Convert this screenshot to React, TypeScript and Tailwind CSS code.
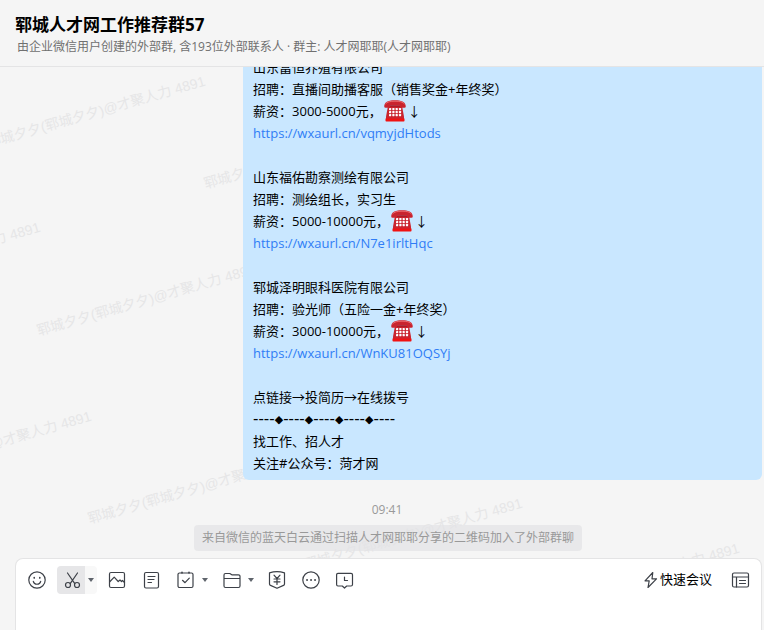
import React from 'react';

const JOBS = [
  {
    company: '山东富恒养殖有限公司',
    role: '直播间助播客服（销售奖金+年终奖）',
    salary: '3000-5000元，',
    url: 'https://wxaurl.cn/vqmyjdHtods',
  },
  {
    company: '山东福佑勘察测绘有限公司',
    role: '测绘组长，实习生',
    salary: '5000-10000元，',
    url: 'https://wxaurl.cn/N7e1irltHqc',
  },
  {
    company: '郓城泽明眼科医院有限公司',
    role: '验光师（五险一金+年终奖）',
    salary: '3000-10000元，',
    url: 'https://wxaurl.cn/WnKU81OQSYj',
  },
];

// Start points of the repeated watermark, relative to the chat area
const WATERMARKS = [
  { x: -13, y: 83 },
  { x: 204, y: 124 },
  { x: -178, y: 229 },
  { x: 37, y: 271 },
  { x: -127, y: 418 },
  { x: 88, y: 459 },
  { x: 304, y: 505 },
  { x: 521, y: 550 },
];

function Phone() {
  return (
    <svg viewBox="0 0 24 24" className="mx-px -mt-1.5 -mb-0.5 inline-block size-6 align-middle" role="img" aria-label="电话">
      <path d="M5 7h14l2 10.500v4H3v-4z" fill="#c9242e" />
      <path d="M2.500 19.500h19v2.200q0 .8-.8.800H3.300q-.8 0-.8-.8z" fill="#f01212" />
      <path d="M1.200 7.200C1.500 2.800 6 1.300 12 1.300s10.500 1.500 10.800 5.900q0 1.600-1.400 1.600h-3.200q-1.200 0-1.200-1.300V6.200H7v1.300q0 1.300-1.200 1.300H2.600Q1.200 8.800 1.200 7.200z" fill="#c9242e" />
      <path d="M2.500 5C4 2.800 7.500 2.200 12 2.200s8 .6 9.500 2.800" fill="none" stroke="#ec6a6e" strokeWidth="1" />
      <path d="M7 6.200h10v1.500H7z" fill="#a81620" />
      <g fill="#fff">
        {[9, 12, 15].map((y) =>
          [6, 9.3, 12.6, 15.900].map((x) => <rect key={`${x}-${y}`} x={x} y={y} width="2.200" height="2.200" rx=".4" />)
        )}
      </g>
    </svg>
  );
}

function Icon({ children }: { children: React.ReactNode }) {
  return (
    <svg viewBox="0 0 18 18" className="size-[18px] overflow-visible" fill="none" stroke="#3d4148" strokeWidth="1.2" strokeLinecap="round" strokeLinejoin="round">
      {children}
    </svg>
  );
}

function ToolButton({ label, active, children }: { label: string; active?: boolean; children: React.ReactNode }) {
  return (
    <button
      aria-label={label}
      className={`flex size-7 items-center justify-center ${active ? 'rounded-l bg-[#e6e6e8]' : 'rounded hover:bg-gray-100'}`}
    >
      <Icon>{children}</Icon>
    </button>
  );
}

function Caret({ label, active }: { label: string; active?: boolean }) {
  return (
    <button aria-label={label} className={`flex h-7 w-3 items-center justify-center rounded-r ${active ? 'bg-[#f8f8f8]' : ''}`}>
      <svg viewBox="0 0 6 4" className="h-1 w-1.5">
        <path d="M0 0h6L3 4z" fill="#5f646c" />
      </svg>
    </button>
  );
}

function Header() {
  return (
    <header className="shrink-0 border-b border-[#e4e4e5] px-[15px] pt-3 pb-2.5">
      <h1 className="text-[17px] leading-[26px] font-bold text-black">郓城人才网工作推荐群57</h1>
      <p className="pl-0.5 text-xs leading-[18px] text-[#707070]">
        由企业微信用户创建的外部群, 含193位外部联系人 · 群主: 人才网耶耶(人才网耶耶)
      </p>
    </header>
  );
}

function Divider() {
  return (
    <p className="h-[22px] font-['DejaVu_Sans',sans-serif] text-[15px]">
      {[0, 1, 2, 3].map((i) => (
        <React.Fragment key={i}>
          ----<span className="align-middle text-[11px] leading-none">◆</span>
        </React.Fragment>
      ))}
      ----
    </p>
  );
}

function JobMessage() {
  return (
    <div className="relative mr-0.5 ml-[243px] shrink-0 rounded-md bg-[#c9e7ff] px-2.5 py-1.5 text-[13px] leading-[22px] text-black">
      {JOBS.map((job) => (
        <div key={job.url} className="mb-[22px]">
          <p className="h-[22px]">{job.company}</p>
          <p className="h-[22px]">招聘：{job.role}</p>
          <p className="h-[22px] whitespace-nowrap">
            薪资：{job.salary}
            <Phone />↓
          </p>
          <p className="h-[22px]">
            <a href={job.url} className="text-[#2f7df6]">{job.url}</a>
          </p>
        </div>
      ))}
      <p>点链接→投简历→在线拨号</p>
      <Divider />
      <p>找工作、招人才</p>
      <p>关注#公众号：菏才网</p>
    </div>
  );
}

function Toolbar() {
  return (
    <div className="flex items-center justify-between px-[7px] pt-[7px]">
      <div className="flex items-center gap-1.5">
        <ToolButton label="表情">
          <circle cx="9" cy="9" r="8.2" />
          <path d="M5.300 10.300a3.800 3.800 0 0 0 7.400 0" />
          <path d="M6.200 6.500v.6M11.800 6.500v.6" strokeWidth="1.6" />
        </ToolButton>
        <div className="flex">
          <ToolButton label="截图" active>
            <path d="M5.500 2l7.300 10.600M15.500 2L8.200 12.600" />
            <circle cx="6" cy="14" r="2.500" />
            <circle cx="15" cy="14" r="2.500" />
          </ToolButton>
          <Caret label="截图选项" active />
        </div>
        <ToolButton label="图片">
          <rect x="1.500" y="1.500" width="15" height="15" rx="1.500" />
          <path d="M2 10.500l4.200-4.300 4 4.300 1.800-1.500 1.500 1.500 1-1 2 2" />
        </ToolButton>
        <ToolButton label="文档">
          <rect x="2.500" y="1.500" width="14" height="15.500" rx="1.500" />
          <path d="M6 5.500h7M6 8.500h6M6 11.500h3.500" />
        </ToolButton>
        <div className="flex">
          <ToolButton label="日程">
            <rect x="2" y="2" width="15" height="14.500" rx="1.500" />
            <path d="M6 1.200v.8M13 1.200v.8" strokeWidth="1.6" />
            <path d="M6.500 9.300l2.500 2.400 4.300-4.500" />
          </ToolButton>
          <Caret label="日程选项" />
        </div>
        <div className="flex">
          <ToolButton label="文件">
            <path d="M2 4a1.500 1.500 0 0 1 1.500-1.500h4.300l2 1.300h6.700A1.500 1.500 0 0 1 18 5.300v9.700a1.500 1.500 0 0 1-1.500 1.500h-13A1.500 1.500 0 0 1 2 15zM2 7.500h16" />
          </ToolButton>
          <Caret label="文件选项" />
        </div>
        <ToolButton label="收款">
          <path d="M1.500 1.800Q9-.4 16.500 1.800V13Q16.500 14 15.500 14.400L9 17.300l-6.500-2.900Q1.500 14 1.500 13z" />
          <path d="M6 4.200l3 3.300 3-3.300M9 7.500v6M6 8h6M6 10.800h6" />
        </ToolButton>
        <ToolButton label="更多">
          <circle cx="9" cy="9" r="8.2" />
          <path d="M5 9h.1M9 9h.1M13 9h.1" strokeWidth="1.8" />
        </ToolButton>
        <ToolButton label="聊天记录">
          <path d="M2 2.300h13A1.500 1.500 0 0 1 16.500 3.800v9.700a1.500 1.500 0 0 1-1.500 1.500h-4.300L8.500 17l-2.200-2H2A1.500 1.500 0 0 1 .6 13.500V3.800a1.500 1.500 0 0 1 1.400-1.500z" />
          <path d="M8.500 6v3.500h3" />
        </ToolButton>
      </div>
      <div className="flex items-center gap-3.5">
        <button className="flex h-7 items-center gap-0.5 text-[13px] text-black">
          <svg viewBox="0 0 14 18" className="h-[18px] w-3.5" fill="none" stroke="#3d4148" strokeWidth="1.2" strokeLinejoin="round">
            <path d="M8.800 1.500L1 9.800h4.200L4 16.500l8.500-8.700H8z" />
          </svg>
          快速会议
        </button>
        <ToolButton label="侧边栏">
          <rect x="1.500" y="2" width="16" height="14" rx="1.500" />
          <path d="M1.500 6h16M5.500 6v10M8.500 9.500h6M8.500 12.500h6" />
        </ToolButton>
      </div>
    </div>
  );
}

export default function App() {
  return (
    <div className="flex h-screen flex-col overflow-hidden bg-[#f5f5f5] font-['Open_Sans','Noto_Sans_CJK_SC',sans-serif]">
      <Header />
      <main className="relative flex min-h-0 flex-1 flex-col justify-end overflow-hidden">
        <div aria-hidden="true" className="pointer-events-none absolute inset-0">
          {WATERMARKS.map((mark) => (
            <span
              key={`${mark.x},${mark.y}`}
              className="absolute origin-left -rotate-[16deg] font-['Liberation_Sans','Noto_Sans_CJK_SC',sans-serif] text-sm leading-none whitespace-nowrap text-[#e6e6e7]"
              style={{ left: mark.x, top: mark.y - 14 }}
            >
              郓城夕夕(郓城夕夕)@才聚人力 4891
            </span>
          ))}
        </div>
        <JobMessage />
        <time className="relative mt-5 shrink-0 pl-2.5 text-center text-xs leading-5 text-[#999]">09:41</time>
        <p className="relative mt-[5px] mb-[7px] ml-3 shrink-0 self-center rounded-sm bg-[#e3e3e5]/70 px-2 text-xs leading-[26px] text-[#999]">
          来自微信的蓝天白云通过扫描人才网耶耶分享的二维码加入了外部群聊
        </p>
      </main>
      <footer className="relative mr-0.5 ml-[15px] shrink-0 rounded-t-lg border border-b-0 border-[#e4e4e5] bg-white">
        <Toolbar />
        <textarea aria-label="输入消息" rows={1} className="block h-9 w-full resize-none bg-transparent px-3 text-[13px] outline-none" />
      </footer>
    </div>
  );
}
